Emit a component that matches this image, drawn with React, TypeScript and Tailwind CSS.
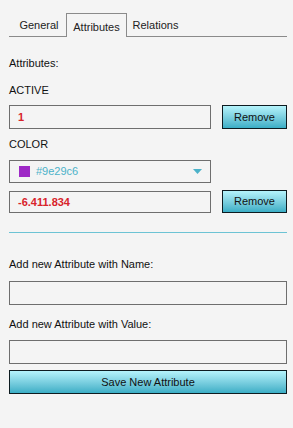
import React from "react";

const btn =
  "border border-[#0d1b20] bg-gradient-to-b from-[#b4f3fb] to-[#3aaec6] text-[#111] text-[11px]";

export default function App() {
  return (
    <div
      className="w-[293px] h-[428px] bg-[#f4f4f4] pl-[9px] pr-[6px] text-[11px] text-[#111]"
      style={{ fontFamily: '"Liberation Sans", Arial, sans-serif' }}
    >
      {/* tabs */}
      <div className="pt-[13px]">
        <div className="flex h-[24px] border-b border-[#8a8a8a] pl-[3px]">
          <div className="w-[54px] flex items-center justify-center text-[11px] text-[#222] pt-[2px]">General</div>
          <div className="w-[61px] flex items-center justify-center text-[11px] text-[#222] border border-[#8a8a8a] border-b-0 bg-[#f4f4f4] mb-[-1px] pt-[3px]">
            Attributes
          </div>
          <div className="w-[57px] flex items-center justify-center text-[11px] text-[#222] pt-[2px]">Relations</div>
        </div>
      </div>

      <div className="mt-[20px] h-[12px] leading-[12px]">Attributes:</div>

      <div className="mt-[15px] h-[12px] leading-[12px]">ACTIVE</div>
      <div className="mt-[9px] flex gap-[11px]">
        <div className="w-[202px] h-[24px] border border-[#6e6e6e] flex items-center pl-[8px] font-bold text-[#d8232a]">
          1
        </div>
        <button className={`w-[65px] h-[24px] ${btn}`}>Remove</button>
      </div>

      <div className="mt-[9px] h-[12px] leading-[12px]">COLOR</div>
      <div className="mt-[10px] w-[202px] h-[23px] border border-[#6e6e6e] flex items-center pl-[9px] pr-[8px]">
        <div className="w-[11px] h-[11px] bg-[#9e29c6] mr-[6px]" />
        <span className="text-[#4cb2c9] text-[11px] flex-1">#9e29c6</span>
        <svg width="9" height="5" viewBox="0 0 9 5">
          <polygon points="0,0 9,0 4.5,5" fill="#4cb2c9" />
        </svg>
      </div>
      <div className="mt-[8px] flex gap-[11px]">
        <div className="w-[202px] h-[22px] border border-[#6e6e6e] flex items-center pl-[8px] font-bold text-[#d8232a]">
          -6.411.834
        </div>
        <button className={`w-[65px] h-[23px] -mt-[1px] ${btn}`}>Remove</button>
      </div>

      <div className="mt-[19px] h-px bg-[#6cc3d4]" />

      <div className="mt-[25px] h-[12px] leading-[12px]">Add new Attribute with Name:</div>
      <div className="mt-[11px] h-[24px] border border-[#6e6e6e]" />

      <div className="mt-[13px] h-[12px] leading-[12px]">Add new Attribute with Value:</div>
      <div className="mt-[10px] h-[24px] border border-[#6e6e6e]" />
      <button className={`mt-[6px] w-full h-[24px] ${btn}`}>Save New Attribute</button>
    </div>
  );
}
